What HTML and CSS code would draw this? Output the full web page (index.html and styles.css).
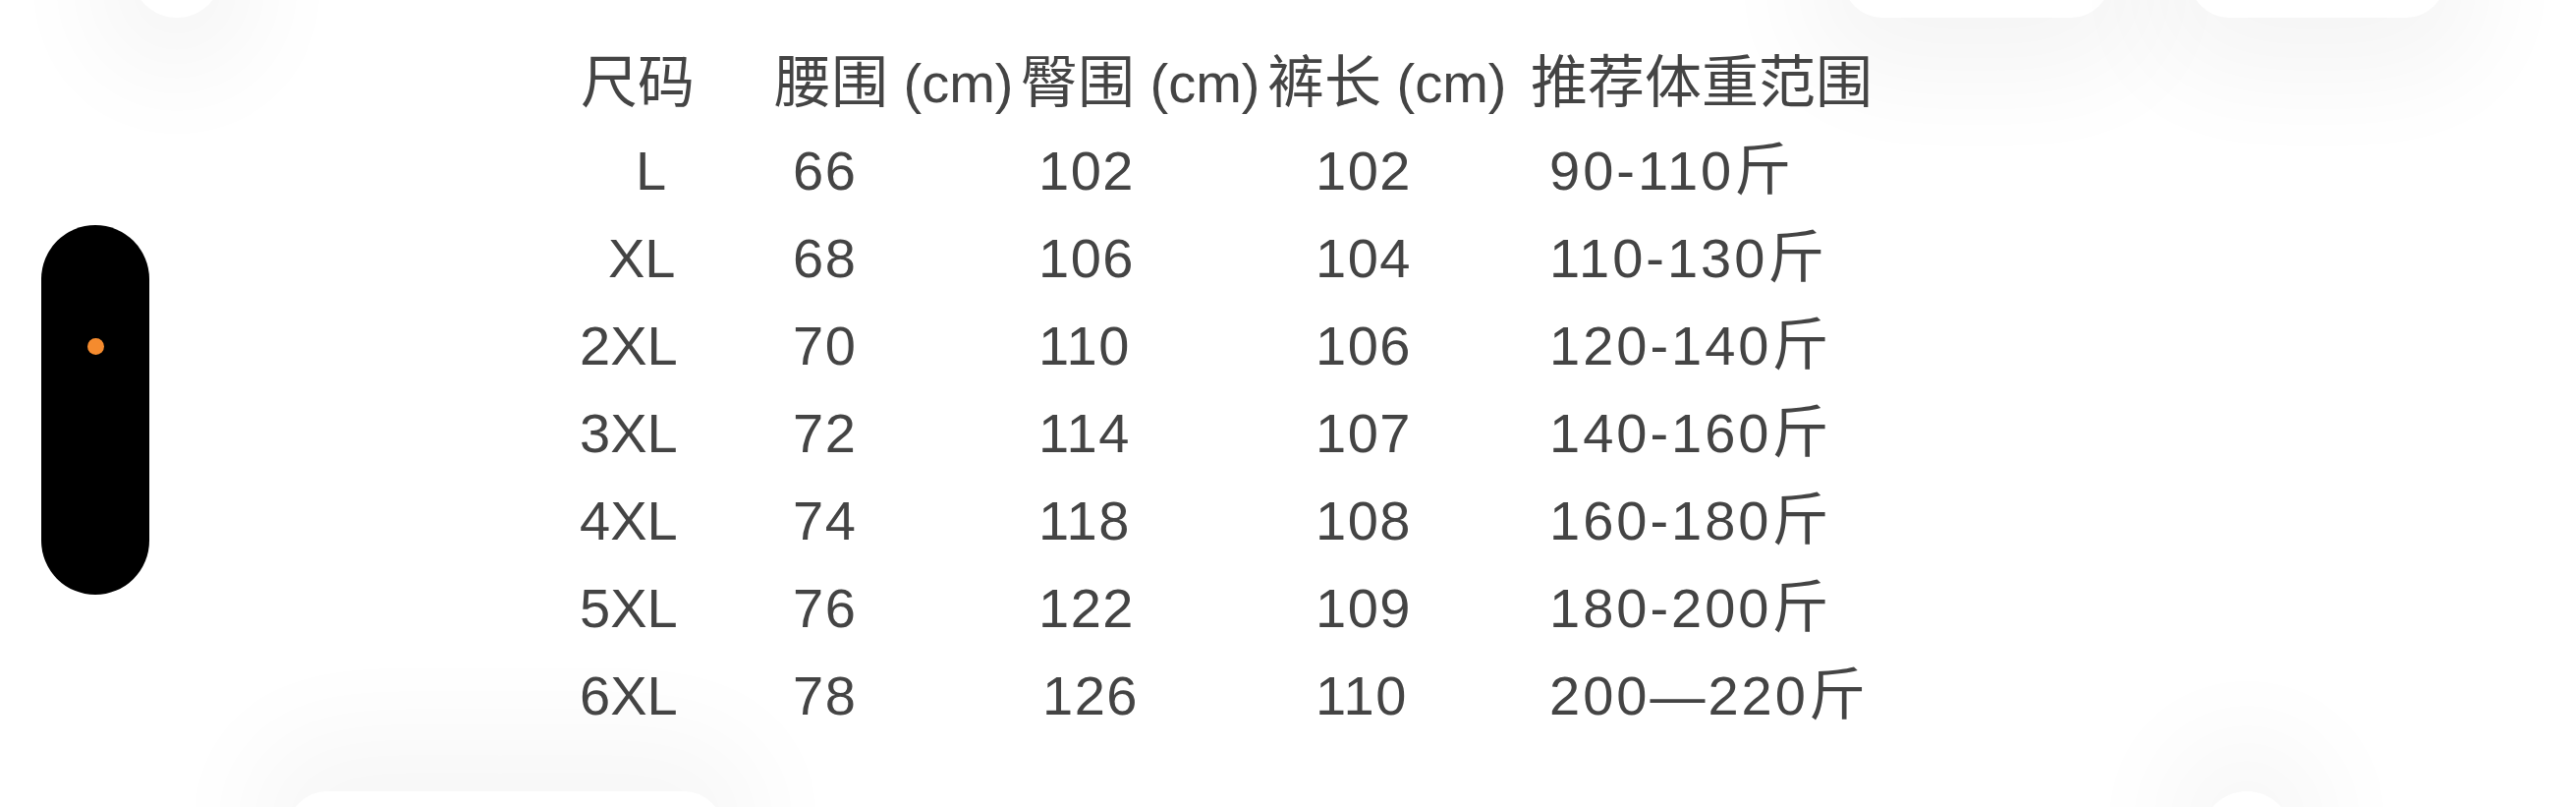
FILE: index.html
```html
<!DOCTYPE html>
<html lang="zh-CN">
<head>
<meta charset="utf-8">
<title>尺码表</title>
<link rel="stylesheet" href="styles.css">
</head>
<body>
<div class="canvas">
  <div class="backdrop" aria-hidden="true">
    <div class="blob blob-tl"></div>
    <div class="blob blob-tr1"></div>
    <div class="blob blob-tr2"></div>
    <div class="blob blob-bl"></div>
    <div class="blob blob-br"></div>
  </div>
  <div class="page">
    <div class="pill"><span class="dot"></span></div>
    <div class="chart">
      <div class="cell head"><span class="cjk">尺码</span></div>
      <div class="cell head"><span class="cjk">腰围</span> (cm)</div>
      <div class="cell head"><span class="cjk">臀围</span> (cm)</div>
      <div class="cell head"><span class="cjk">裤长</span> (cm)</div>
      <div class="cell head"><span class="cjk">推荐体重范围</span></div>

      <div class="cell size size-l">L</div>
      <div class="cell val waist">66</div>
      <div class="cell val hip">102</div>
      <div class="cell val len">102</div>
      <div class="cell val wt">90-110<span class="cjk">斤</span></div>

      <div class="cell size size-xl">XL</div>
      <div class="cell val waist">68</div>
      <div class="cell val hip">106</div>
      <div class="cell val len">104</div>
      <div class="cell val wt">110-130<span class="cjk">斤</span></div>

      <div class="cell size">2XL</div>
      <div class="cell val waist">70</div>
      <div class="cell val hip">110</div>
      <div class="cell val len">106</div>
      <div class="cell val wt">120-140<span class="cjk">斤</span></div>

      <div class="cell size">3XL</div>
      <div class="cell val waist">72</div>
      <div class="cell val hip">114</div>
      <div class="cell val len">107</div>
      <div class="cell val wt">140-160<span class="cjk">斤</span></div>

      <div class="cell size">4XL</div>
      <div class="cell val waist">74</div>
      <div class="cell val hip">118</div>
      <div class="cell val len">108</div>
      <div class="cell val wt">160-180<span class="cjk">斤</span></div>

      <div class="cell size">5XL</div>
      <div class="cell val waist">76</div>
      <div class="cell val hip">122</div>
      <div class="cell val len">109</div>
      <div class="cell val wt">180-200<span class="cjk">斤</span></div>

      <div class="cell size">6XL</div>
      <div class="cell val waist">78</div>
      <div class="cell val hip hip-wide">126</div>
      <div class="cell val len">110</div>
      <div class="cell val wt">200—220<span class="cjk">斤</span></div>
    </div>
  </div>
</div>
</body>
</html>
```
FILE: styles.css
```css
html, body {
  margin: 0;
  padding: 0;
  background: #ffffff;
}

.canvas {
  position: relative;
  width: 2622px;
  height: 821px;
  overflow: hidden;
  background: #ffffff;
}

/* soft, blurred decorative shapes at the edges */
.backdrop {
  position: absolute;
  inset: 0;
  z-index: 0;
}

.blob {
  position: absolute;
  background: #ffffff;
  box-shadow: 0 20px 110px 40px rgba(0, 0, 0, 0.045);
}

.blob-tl {
  left: 134px;
  top: -80px;
  width: 92px;
  height: 98px;
  border-radius: 46px;
}

.blob-tr1 {
  left: 1876px;
  top: -80px;
  width: 272px;
  height: 98px;
  border-radius: 40px;
}

.blob-tr2 {
  left: 2229px;
  top: -80px;
  width: 260px;
  height: 98px;
  border-radius: 40px;
}

.blob-bl {
  left: 293px;
  top: 805px;
  width: 443px;
  height: 100px;
  border-radius: 40px;
  box-shadow: 0 -20px 110px 40px rgba(0, 0, 0, 0.035);
}

.blob-br {
  left: 2241px;
  top: 805px;
  width: 92px;
  height: 100px;
  border-radius: 46px;
  box-shadow: 0 -20px 110px 40px rgba(0, 0, 0, 0.035);
}

.page {
  position: relative;
  z-index: 1;
  display: flex;
  align-items: flex-start;
}

.pill {
  flex: none;
  width: 110px;
  height: 376px;
  margin: 229px 0 0 42px;
  background: #000000;
  border-radius: 55px;
  display: flex;
  justify-content: center;
  box-sizing: border-box;
  padding-top: 115px;
}

.dot {
  display: block;
  width: 17px;
  height: 17px;
  border-radius: 50%;
  background: #f58b2e;
}

.chart {
  margin: 40px 0 0 438px;
  display: grid;
  grid-template-columns: 197px 251px 251px 268px 420px;
  grid-auto-rows: 89px;
  font-family: "Liberation Sans", Arial, "Noto Sans CJK SC", sans-serif;
  font-size: 56px;
  line-height: 89px;
  color: #444444;
}

.cell {
  white-space: nowrap;
}

.cjk {
  font-family: "Noto Sans CJK SC", sans-serif;
  font-size: 58px;
  line-height: 1;
  letter-spacing: 0;
}

.head {
  padding-left: 1px;
}

.size {
  padding-left: 0;
}

.size-l {
  padding-left: 57px;
}

.size-xl {
  padding-left: 29px;
}

.val {
  letter-spacing: 1.5px;
}

.waist {
  padding-left: 20px;
}

.hip {
  padding-left: 19px;
}

.hip-wide {
  padding-left: 23px;
}

.len {
  padding-left: 50px;
}

.wt {
  padding-left: 20px;
  letter-spacing: 3px;
}
```
